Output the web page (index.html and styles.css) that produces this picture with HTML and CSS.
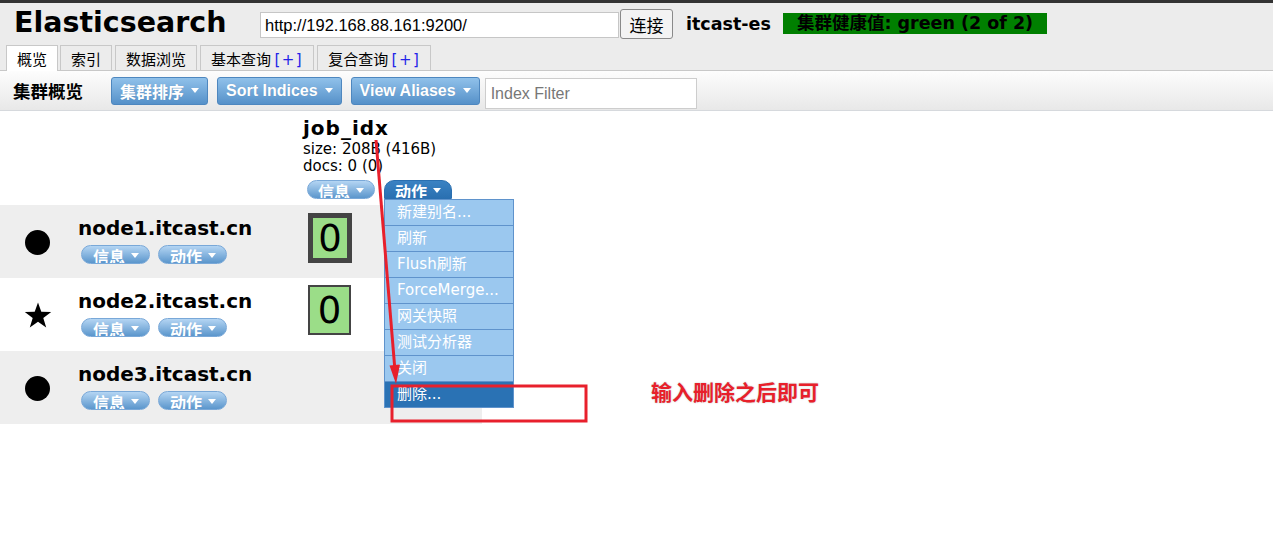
FILE: index.html
```html
<!DOCTYPE html>
<html lang="zh">
<head>
<meta charset="utf-8">
<title>Elasticsearch Head</title>
<link rel="stylesheet" href="styles.css">
</head>
<body>
<header class="header">
  <div class="header-row">
    <h1 class="title">Elasticsearch</h1>
    <input class="url" type="text" value="http://192.168.88.161:9200/">
    <button class="connect">连接</button>
    <span class="cluster-name">itcast-es</span>
    <span class="health">集群健康值: green (2 of 2)</span>
  </div>
  <nav class="tabs">
    <div class="tab active">概览</div>
    <div class="tab">索引</div>
    <div class="tab">数据浏览</div>
    <div class="tab">基本查询 <span class="plus">[+]</span></div>
    <div class="tab">复合查询 <span class="plus">[+]</span></div>
  </nav>
</header>

<div class="toolbar">
  <span class="toolbar-label">集群概览</span>
  <button class="btn">集群排序 <i class="caret"></i></button>
  <button class="btn">Sort Indices <i class="caret"></i></button>
  <button class="btn last">View Aliases <i class="caret"></i></button>
  <input class="filter" type="text" placeholder="Index Filter">
</div>

<main class="overview">
  <div class="row head-row">
    <div class="cell-icon"></div>
    <div class="cell-name"></div>
    <div class="cell-index">
      <div class="index-name">job_idx</div>
      <div class="index-meta">size: 208B (416B)</div>
      <div class="index-meta">docs: 0 (0)</div>
      <div class="pills">
        <span class="pill"><span class="pill-text">信息</span><i class="caret"></i></span>
        <span class="dropdown">
          <span class="pill open"><span class="pill-text">动作</span><i class="caret"></i></span>
          <ul class="menu">
            <li>新建别名...</li>
            <li>刷新</li>
            <li>Flush刷新</li>
            <li>ForceMerge...</li>
            <li>网关快照</li>
            <li>测试分析器</li>
            <li>关闭</li>
            <li class="selected">删除...</li>
          </ul>
        </span>
      </div>
    </div>
  </div>

  <div class="row node gray">
    <div class="cell-icon"><span class="dot"></span></div>
    <div class="cell-name">
      <div class="node-name">node1.itcast.cn</div>
      <div class="pills">
        <span class="pill"><span class="pill-text">信息</span><i class="caret"></i></span>
        <span class="pill"><span class="pill-text">动作</span><i class="caret"></i></span>
      </div>
    </div>
    <div class="cell-shard"><div class="shard primary">0</div></div>
  </div>

  <div class="row node">
    <div class="cell-icon">
      <svg class="star" width="28" height="27" viewBox="0 0 28 27"><polygon points="14,0.5 17.3,9.7 27.2,9.9 19.3,15.9 22.2,25.5 14,19.8 5.8,25.5 8.7,15.9 0.8,9.9 10.7,9.7" fill="#000"/></svg>
    </div>
    <div class="cell-name">
      <div class="node-name">node2.itcast.cn</div>
      <div class="pills">
        <span class="pill"><span class="pill-text">信息</span><i class="caret"></i></span>
        <span class="pill"><span class="pill-text">动作</span><i class="caret"></i></span>
      </div>
    </div>
    <div class="cell-shard"><div class="shard replica">0</div></div>
  </div>

  <div class="row node gray">
    <div class="cell-icon"><span class="dot"></span></div>
    <div class="cell-name">
      <div class="node-name">node3.itcast.cn</div>
      <div class="pills">
        <span class="pill"><span class="pill-text">信息</span><i class="caret"></i></span>
        <span class="pill"><span class="pill-text">动作</span><i class="caret"></i></span>
      </div>
    </div>
    <div class="cell-shard"></div>
  </div>
</main>

<svg class="annotation" width="1273" height="551" viewBox="0 0 1273 551">
  <line x1="376" y1="140" x2="394.6" y2="366" stroke="#e8202c" stroke-width="3"/>
  <polygon points="396,384 400,364.6 389.5,365.4" fill="#e8202c"/>
  <rect x="392" y="386" width="194" height="35" fill="none" stroke="#e8202c" stroke-width="3"/>
</svg>
<div class="note">输入删除之后即可</div>
</body>
</html>
```

FILE: styles.css
```css
* { box-sizing: border-box; }

body {
  margin: 0;
  width: 1273px;
  height: 551px;
  overflow: hidden;
  position: relative;
  background: #fff;
  color: #000;
  font-family: "DejaVu Sans", "Noto Sans CJK SC", sans-serif;
}

/* ---------- header ---------- */
.header {
  background: #ececec;
  border-top: 3px solid #333;
}

.header-row {
  display: flex;
  align-items: center;
  height: 42px;
  padding-left: 14px;
}

.title {
  margin: 0;
  width: 246px;
  font-size: 28.5px;
  font-weight: bold;
  line-height: 1;
  margin-top: -2px;
}

.url {
  width: 359px;
  height: 26px;
  margin: 2px 0 0 0;
  padding: 0 4px;
  border: 1px solid #c6c6c6;
  background: #fff;
  font: 16.5px "Liberation Sans", sans-serif;
  color: #000;
}

.connect {
  width: 53px;
  height: 30px;
  margin-left: 1px;
  padding: 0;
  border: 1px solid #8a8a8a;
  border-radius: 3px;
  background: #f3f3f3;
  font: 17px "Noto Sans CJK SC", sans-serif;
  color: #000;
}

.cluster-name {
  margin-left: 13px;
  font-size: 17.5px;
  font-weight: bold;
}

.health {
  margin-left: 12px;
  height: 21px;
  padding: 0 14px;
  background: #007f00;
  font-size: 17.5px;
  font-weight: bold;
  line-height: 21px;
  margin-top: -2px;
}

/* ---------- tabs ---------- */
.tabs {
  display: flex;
  align-items: flex-start;
  height: 26px;
  padding-left: 6px;
  border-bottom: 1px solid #c8c8c8;
}

.tab {
  height: 25px;
  margin-right: 3px;
  padding: 0 10px;
  border: 1px solid #c8c8c8;
  border-bottom: none;
  background: #ececec;
  font: 15px "Noto Sans CJK SC", sans-serif;
  line-height: 25px;
}

.tab:first-child { margin-right: 2px; }

.tab.active {
  height: 26px;
  background: #fff;
}

.plus {
  color: #2323e8;
  font-family: "DejaVu Sans", sans-serif;
  letter-spacing: 1.5px;
}

/* ---------- toolbar ---------- */
.toolbar {
  display: flex;
  align-items: center;
  height: 40px;
  padding-left: 13px;
  border-bottom: 1px solid #d6d9dd;
  background: linear-gradient(#fdfdfd, #e8e8e8);
}

.toolbar-label {
  width: 98px;
  font: bold 17.5px "Noto Sans CJK SC", sans-serif;
}

.btn {
  display: flex;
  align-items: center;
  gap: 7px;
  height: 28px;
  margin-right: 9px;
  padding: 0 8px;
  border: 1px solid #4e87bf;
  border-radius: 3px;
  background: linear-gradient(#90c1ea, #5691c9);
  color: #fff;
  font: bold 16px "Liberation Sans", "Noto Sans CJK SC", sans-serif;
  text-shadow: 0 0 1px rgba(0, 0, 0, 0.15);
}

.btn.last { margin-right: 5px; }

.caret {
  display: inline-block;
  flex-shrink: 0;
  width: 0;
  height: 0;
  border-left: 4px solid transparent;
  border-right: 4px solid transparent;
  border-top: 5px solid #fff;
}

.filter {
  align-self: flex-start;
  margin-top: 7px;
  width: 212px;
  height: 31px;
  padding: 0 5px;
  border: 1px solid #cdcdcd;
  background: #fff;
  font: 16px "Liberation Sans", sans-serif;
}

.filter::placeholder { color: #777; }

/* ---------- overview ---------- */
.overview { width: 482px; }

.row {
  display: grid;
  grid-template-columns: 75px 225px 182px;
}

.head-row { height: 94px; }

.node { height: 73px; }

.gray { background: #eee; }

.cell-icon {
  display: flex;
  justify-content: center;
  align-items: flex-start;
  padding-top: 25px;
}

.dot {
  width: 25px;
  height: 25px;
  border-radius: 50%;
  background: #000;
}

.star { margin-top: -1px; }

.cell-name {
  padding: 11px 0 0 3px;
}

.node-name {
  font-size: 20px;
  font-weight: bold;
  line-height: 24px;
}

.pills {
  display: flex;
  gap: 8px;
  margin: 5px 0 0 3px;
}

.pill {
  display: flex;
  align-items: flex-start;
  gap: 6px;
  height: 19px;
  padding: 0 10px 0 11px;
  overflow: hidden;
  white-space: nowrap;
  border: 1px solid #79a8d8;
  border-radius: 10px;
  background: linear-gradient(#b4d5f3, #5b96cc);
  color: #fff;
  font: bold 16px "Noto Sans CJK SC", sans-serif;
}

.pill-text {
  flex-shrink: 0;
  line-height: 1;
  margin-top: 2px;
}

.pill .caret {
  align-self: center;
  margin-top: 1px;
}

.pill.open {
  border-color: #2a6fb0;
  border-radius: 10px 10px 0 0;
  background: linear-gradient(#3a82c3, #2a70b1);
}

/* index column */
.cell-index {
  padding: 5px 0 0 3px;
}

.index-name {
  font-size: 20px;
  font-weight: bold;
  line-height: 24px;
  letter-spacing: 1px;
  margin-bottom: 1px;
}

.index-meta {
  font-size: 15px;
  line-height: 17px;
}

.cell-index .pills {
  gap: 9px;
  margin: 5px 0 0 4px;
}

.cell-index .pill { padding: 0 10px; }

.dropdown {
  position: relative;
  display: block;
}

.menu {
  position: absolute;
  top: 19px;
  left: 0;
  z-index: 10;
  width: 130px;
  margin: 0;
  padding: 0;
  list-style: none;
  border: 1px solid #5f93cc;
  border-bottom: none;
  background: #9bc8ef;
}

.menu li {
  height: 26px;
  padding-left: 12px;
  border-bottom: 1px solid #5f93cc;
  color: #fff;
  font-size: 15px;
  line-height: 25px;
  white-space: nowrap;
}

.menu li.selected { background: #2a72b4; }

/* shards */
.cell-shard {
  padding: 8px 0 0 8px;
}

.shard {
  display: flex;
  align-items: center;
  justify-content: center;
  width: 44px;
  height: 50px;
  background: #9bdd88;
  font-size: 37px;
  line-height: 1;
}

.shard.primary { border: 5px solid #444; }

.shard.replica {
  width: 43px;
  margin-top: -1px;
  border: 2px solid #444;
}

/* ---------- annotation overlay ---------- */
.annotation {
  position: absolute;
  left: 0;
  top: 0;
  z-index: 20;
  pointer-events: none;
}

.note {
  position: absolute;
  left: 651px;
  top: 380px;
  z-index: 20;
  color: #e8202a;
  font: bold 21px "Noto Sans CJK SC", sans-serif;
  line-height: 22px;
  text-shadow: 0 0 2px #ccc, 0 0 1px #ddd;
}
```
